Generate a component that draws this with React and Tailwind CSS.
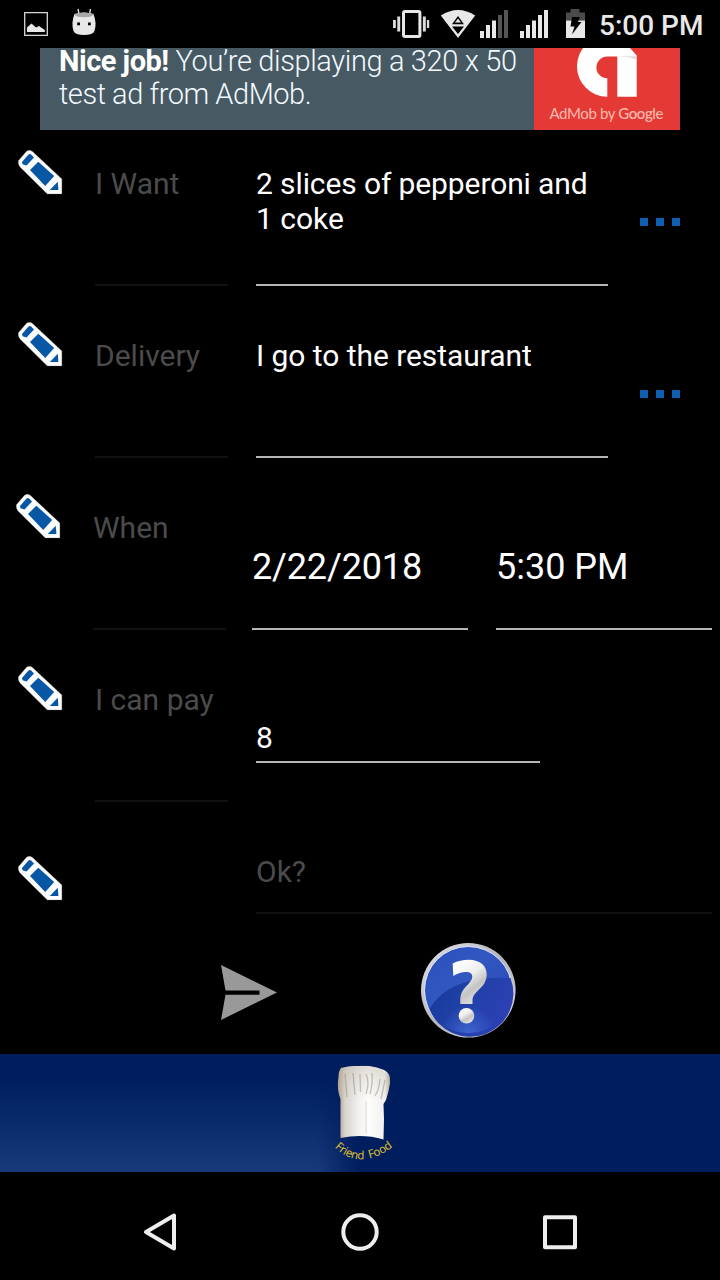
import React from "react";

function Pencil() {
  return (
    <svg viewBox="0 0 46 46" className="h-[46px] w-[46px] shrink-0">
      <path d="M1.600 11.500L9.500 2.300Q12.500 .300 15.500 2.600L44.900 30V44.900H30.300L3 18Q.500 14.500 1.600 11.500Z" fill="#fcfdff" stroke="#8f7f70" strokeOpacity=".5" strokeWidth=".6" />
      <path d="M5 13L11.500 5.500Q13 4.500 14.400 5.700L17 8.500L9.500 16.500L5.500 15.300Z" fill="#0857a4" />
      <path d="M13 21L21.300 12.700L37.200 27L28.200 37Z" fill="#0857a4" />
      <path d="M40.800 32.700L41.400 41H32.800Z" fill="#0857a4" />
    </svg>
  );
}

function More() {
  return (
    <div className="flex gap-2">
      <div className="h-2 w-2 bg-[#0e5fae]" />
      <div className="h-2 w-2 bg-[#0e5fae]" />
      <div className="h-2 w-2 bg-[#0e5fae]" />
    </div>
  );
}

function Label({ children }) {
  return (
    <div className="h-[156px] w-[133px] shrink-0 border-b-2 border-[#111111] pt-9 text-[#4b4b4b]">
      {children}
    </div>
  );
}

function StatusBar() {
  return (
    <header className="flex h-12 shrink-0 items-center pl-6 text-[#e8e8e8]">
      <svg viewBox="0 0 80 48" className="h-12 w-20">
        <path d="M.7 12.7H23.3V35.3H.7Z" fill="none" stroke="#d6d6d6" strokeWidth="1.3" />
        <path d="M3 32V27.500L7.500 23.500L12 27.500L15 26L20.800 30V32Z" fill="#e8e8e8" />
        <path d="M54 9L55 14M66.500 9L65.500 14" stroke="#ddd" strokeWidth="1.4" />
        <path d="M50.500 14Q60 11 69.500 14Q73 23 70.500 31Q69 35 60 35Q51 35 49.500 31Q47 23 50.500 14Z" fill="#e8e8e8" />
        <path d="M50.500 14Q60 11 69.500 14Q69 17.300 60 17.300Q51 17.300 50.500 14Z" fill="#a8a8a8" />
        <path d="M53.200 22.400h2.800v2.800h-2.800zM64 22.400h2.800v2.800h-2.800z" fill="#000" />
      </svg>
      <svg viewBox="0 0 200 48" className="ml-auto h-12 w-[200px]">
        <rect x="11.500" y="11.500" width="16.400" height="25" rx="1.500" fill="none" stroke="currentColor" strokeWidth="3" />
        <path d="M1 20h2.800v8H1zM5.300 16.500h2.900v15H5.300zM30.900 16.500h2.900v15h-2.900zM34.900 20H37.200v8h-2.300z" fill="#ddd" />
        <path d="M48.800 15.500Q66 4.500 83.200 15.500L66 38Z" fill="currentColor" />
        <path d="M60 24.300L66 16L72 24.300ZM60 26.500H72L66 34Z" fill="#000" />
        <path d="M63 22.500L66 18.500L69 22.500Z" fill="currentColor" />
        <path d="M88 31h4v7h-4zM94 25h4v13h-4zM100 20.500h4v17.500h-4z" fill="currentColor" />
        <path d="M106 15h4v23h-4zM112 10h4v28h-4z" fill="#555" />
        <path d="M128 31h4v7h-4zM134 25h4v13h-4zM140 20.500h4v17.500h-4zM146 15h4v23h-4zM152 10h4v28h-4z" fill="currentColor" />
        <path d="M174 12.500h4.500V9h9v3.500h5.500v8h-19Z" fill="#4b4b4b" />
        <path d="M174 20.500h19v17.500h-19Z" fill="currentColor" />
        <path d="M180 17H188L186 22H189.500L180 34.500L182.500 26.500H178.500Z" fill="#000" />
      </svg>
      <div className="ml-[7px] w-[121px] pt-0.5 text-[28px] leading-[33px] font-medium whitespace-nowrap">5:00 PM</div>
    </header>
  );
}

function AdBanner() {
  return (
    <section className="mx-10 flex h-[82px] shrink-0 items-end overflow-hidden bg-[#475963]">
      <div className="h-[85px] min-w-0 flex-1 pl-[19px] text-[29px] leading-[33px] font-light tracking-[-0.36px] whitespace-nowrap text-[#f2faff]">
        <div><b className="font-bold tracking-[-0.5px] text-white">Nice job!</b> You’re displaying a 320 x 50</div>
        <div className="tracking-[-0.46px]">test ad from AdMob.</div>
      </div>
      <svg viewBox="0 0 146 82" className="h-[82px] w-[146px] bg-[#e53935]">
        <path d="M73.300 48.700A30.350 30.350 0 0 1 73.300 -12C84-12 90-6 96 0L102.700 7.500V48.700H83.300V8.500H73.300A10.900 10.900 0 1 0 73.300 30.300Z" fill="#fff" />
        <path d="M84 8.500H102.700V11L96 9.500Z" fill="#d5d5d5" />
        <text x="15.500" y="71" textLength="114" fill="#ffb9b0" fontFamily="Lato, sans-serif" fontSize="15">AdMob by <tspan fontWeight="500">Google</tspan></text>
      </svg>
    </section>
  );
}

function HelpIcon() {
  return (
    <svg viewBox="0 0 96 96" className="h-24 w-24">
      <defs>
        <linearGradient id="rim" x2="1" y2="1"><stop stopColor="#e3e3ea" /><stop offset=".5" stopColor="#b4b4bb" /><stop offset="1" stopColor="#d9d9dd" /></linearGradient>
        <linearGradient id="disc" x2="1" y2="1"><stop stopColor="#2b50bd" /><stop offset=".4" stopColor="#3157c0" /><stop offset="1" stopColor="#2b45b5" /></linearGradient>
        <linearGradient id="low" x2="1" y2=".4"><stop stopColor="#15369a" /><stop offset=".45" stopColor="#1f41a6" /><stop offset="1" stopColor="#2c40b4" /></linearGradient>
        <radialGradient id="glow" cx=".5" cy="1" r=".32"><stop stopColor="#4a74dc" stopOpacity=".7" /><stop offset="1" stopColor="#4a74dc" stopOpacity="0" /></radialGradient>
        <linearGradient id="mark" x1=".2" x2=".8" y2="1"><stop stopColor="#fff" /><stop offset=".4" stopColor="#eee" /><stop offset=".65" stopColor="#c4c4c4" /><stop offset="1" stopColor="#e8e8e8" /></linearGradient>
      </defs>
      <circle cx="48.300" cy="48.300" r="47.300" fill="url(#rim)" />
      <circle cx="48.300" cy="48.300" r="43.800" fill="url(#disc)" stroke="#e3e8ff" strokeWidth="1" />
      <path d="M9.500 67Q29 33 90.500 36A43.300 43.300 0 0 1 9.500 67Z" fill="url(#low)" />
      <circle cx="48.300" cy="48.300" r="43" fill="url(#glow)" />
      <path d="M32.700 21.500Q40 17.800 48.500 17.800Q66.700 18.300 66.700 33.500Q66.500 41 59 47.500Q53 53 52.500 57V62H40.300V56.500Q40.500 50 46 44.500Q52.300 38.500 52.300 34.500Q52 30.200 46.500 30Q40 29.800 33.300 34Z" fill="url(#mark)" />
      <circle cx="46.500" cy="73.700" r="7.800" fill="url(#mark)" />
    </svg>
  );
}

function ChefLogo() {
  return (
    <svg viewBox="0 0 80 118" className="h-[118px] w-20">
      <defs>
        <linearGradient id="cloth"><stop stopColor="#b09c8a" /><stop offset=".14" stopColor="#d8d4ce" /><stop offset=".4" stopColor="#f2f1f0" /><stop offset=".6" stopColor="#fdfdfd" /><stop offset=".9" stopColor="#f2f0ed" /><stop offset="1" stopColor="#b3a799" /></linearGradient>
        <linearGradient id="puff" x2="0" y2="1"><stop stopColor="#b5ae9e" stopOpacity=".4" /><stop offset="1" stopColor="#c9c3b5" stopOpacity="0" /></linearGradient>
        <filter id="soft"><feGaussianBlur stdDeviation=".7" /></filter>
        <path id="arc" d="M14.500 93.500Q41 118.500 75 91" />
      </defs>
      <path d="M21 14Q29 12 34 12H49Q57 13 64 16Q71 19 70 29Q69 37 66 46L63.500 50L64 65L63.500 85.500Q43 79.500 20.500 84L20.500 45Q16.500 35 18.500 23Q18.500 17 21 14Z" fill="url(#cloth)" />
      <path d="M21 14Q38 11 49 12Q71 16 70 29Q69 37 66 46H20.500Q16 26 21 14Z" fill="url(#puff)" />
      <g fill="none" stroke="#8c8171" strokeWidth="1.300" strokeOpacity=".45" filter="url(#soft)">
        <path d="M25 20L27 43M33 19L35 41M40 20L40.500 38M46 20Q50 28 46 40M52 19Q53 29 50 40M60 25Q59 36 55 42M65 26L61 45" />
        <path d="M46 47V80" strokeWidth=".8" strokeOpacity=".35" />
      </g>
      <text fill="#e6c62b" fontFamily="Open Sans, sans-serif" fontSize="11.500" fontWeight="500"><textPath href="#arc" textLength="64.500">Friend&#160; Food</textPath></text>
    </svg>
  );
}

export default function App() {
  return (
    <div className="flex h-[1280px] w-[720px] flex-col overflow-hidden bg-black font-[Roboto,sans-serif]">
      <StatusBar />
      <AdBanner />
      <main className="flex h-[924px] shrink-0 flex-col text-[30px] leading-[35px] text-white">
        <section className="flex h-[172px] shrink-0 pl-[17px]">
          <div className="w-[78px] pt-[19px]"><Pencil /></div>
          <Label>I Want</Label>
          <div className="ml-7 h-[156px] w-[352px] border-b-2 border-[#b5b5b5] pt-9"><span className="tracking-[-0.11px]">2 slices of pepperoni and</span><br />1 coke</div>
          <div className="ml-8 pt-[88px]"><More /></div>
        </section>
        <section className="flex h-[172px] shrink-0 pl-[17px]">
          <div className="w-[78px] pt-[19px]"><Pencil /></div>
          <Label>Delivery</Label>
          <div className="ml-7 h-[156px] w-[352px] border-b-2 border-[#b5b5b5] pt-9 tracking-[-0.05px]">I go to the restaurant</div>
          <div className="ml-8 pt-[88px]"><More /></div>
        </section>
        <section className="flex h-[172px] shrink-0 pl-[15px]">
          <div className="w-[78px] shrink-0 pt-[19px]"><Pencil /></div>
          <Label>When</Label>
          <div className="ml-[26px] h-[156px] w-[216px] border-b-2 border-[#b5b5b5] pt-[72px] text-4xl leading-[42px] tracking-[-0.15px]">2/22/2018</div>
          <div className="ml-7 h-[156px] w-[216px] border-b-2 border-[#b5b5b5] pt-[72px] text-4xl leading-[42px]">5:30 PM</div>
        </section>
        <section className="flex h-[172px] shrink-0 pl-[17px]">
          <div className="w-[78px] pt-[19px]"><Pencil /></div>
          <Label>I can pay</Label>
          <div className="ml-7 h-[117px] w-[284px] border-b-2 border-[#b5b5b5] pt-[74px]">8</div>
        </section>
        <section className="flex h-[112px] shrink-0 pl-[17px]">
          <div className="w-[239px] pt-[37px]"><Pencil /></div>
          <div className="h-24 w-[456px] border-b-2 border-[#111111] pt-9 text-[#4b4b4b]">Ok?</div>
        </section>
        <section className="flex pt-[12px] pl-[220px]">
          <svg viewBox="0 0 58 58" className="mt-[22px] h-[58px] w-[58px]">
            <path d="M1 1L57 28.500L1 56L5.500 30.800H39.500V26.500H5.500Z" fill="#999" />
          </svg>
          <div className="ml-[142px]"><HelpIcon /></div>
        </section>
      </main>
      <footer className="relative flex h-[118px] shrink-0 bg-[#001e5e] pl-80">
        <div className="absolute inset-y-0 left-0 w-[360px] bg-linear-to-b from-[#001e5e] from-20% to-[#183a7b] mask-r-from-88%" />
        <div className="relative"><ChefLogo /></div>
      </footer>
      <nav className="flex h-[108px] items-center pt-3">
        <svg viewBox="0 0 720 96" className="h-24 w-[720px]" fill="none" stroke="#eee" strokeWidth="4" strokeLinejoin="round">
          <path d="M146 48L174 31.500V64.500Z" />
          <circle cx="360" cy="48" r="16.700" />
          <rect x="545" y="33.300" width="30" height="30" />
        </svg>
      </nav>
    </div>
  );
}
